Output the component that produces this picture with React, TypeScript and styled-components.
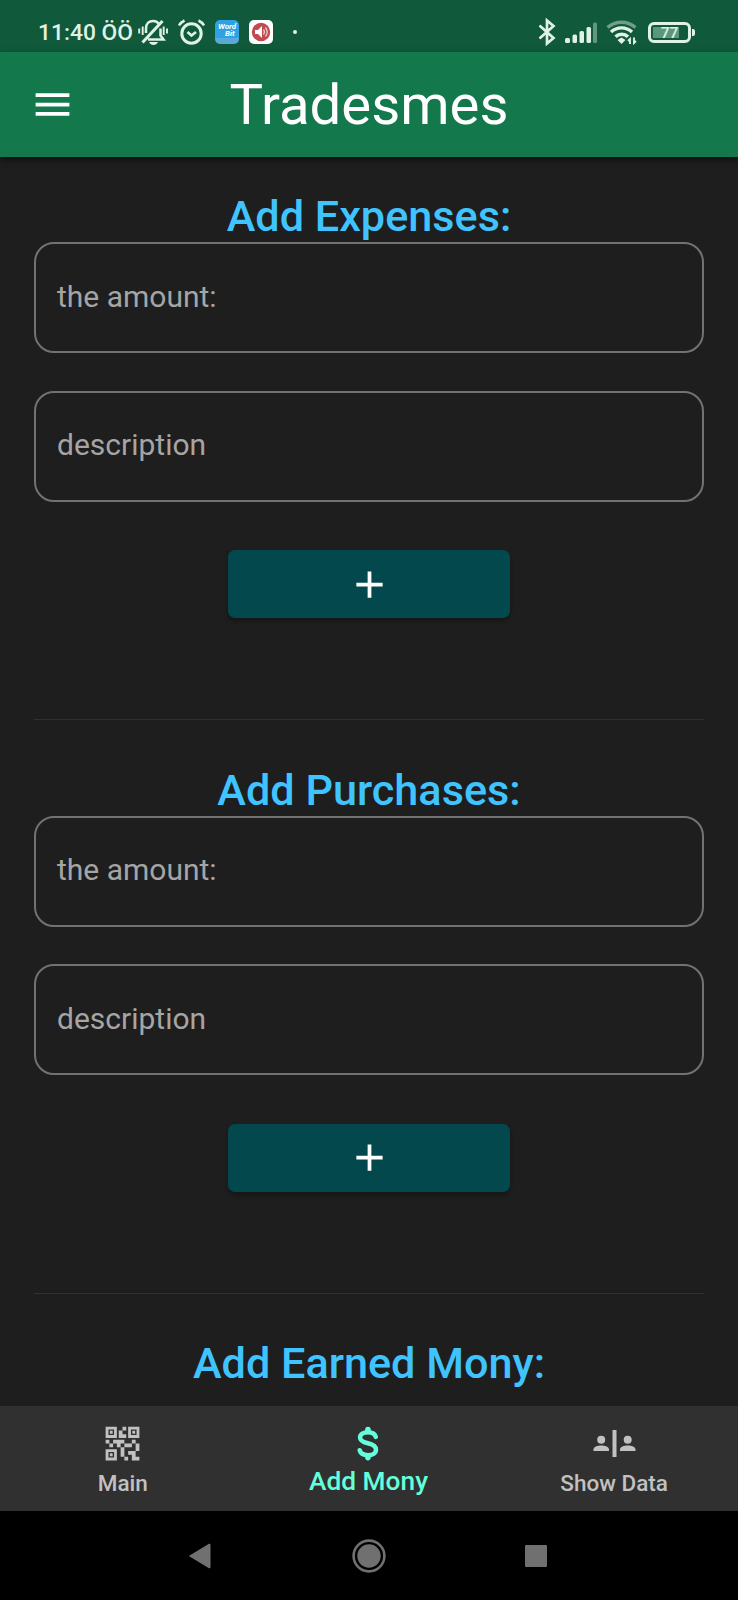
import React from 'react';
import styled, { createGlobalStyle } from 'styled-components';

const Global = createGlobalStyle`
  *{box-sizing:border-box}
  body{margin:0;background:#1e1e1e;font-family:Roboto,"Liberation Sans",sans-serif}
`;
const Screen = styled.div`
  width: 738px;
  height: 1600px;
  display: flex;
  flex-direction: column;
  overflow: hidden;
  background: #1e1e1e;
`;
const StatusBar = styled.div`
  flex: none;
  height: 52px;
  background: #10593a;
  color: #e0f2e6;
  display: flex;
  align-items: flex-start;
  justify-content: space-between;
  padding: 18px 43px 0 38px;
`;
const StatusGroup = styled.div`
  display: flex;
  align-items: center;
  height: 28px;
`;
const Clock = styled.span`
  width: 99px;
  padding-top: 2px;
  font-size: 22.8px;
  line-height: 28px;
  font-weight: 500;
  white-space: nowrap;
`;
const Glyph = styled.svg<{ $gap?: number }>`
  display: block;
  flex: none;
  margin-left: ${p => p.$gap ?? 0}px;
`;
const WordBadge = styled.div`
  width: 24px;
  height: 24px;
  margin-left: 10px;
  padding: 3px 0 0 3px;
  border-radius: 5px;
  background: linear-gradient(#2ea2e4 75%, #5aa9d8 75%);
  color: #fff;
  font: italic 700 8px/7px Roboto, sans-serif;
  display: flex;
  flex-direction: column;
`;
const WordLine = styled.span<{ $indent?: number }>`
  padding-left: ${p => p.$indent ?? 0}px;
`;
const SoundBadge = styled.div`
  width: 24px;
  height: 24px;
  margin-left: 10px;
  border-radius: 5px;
  background: #fff;
  display: flex;
  align-items: center;
  justify-content: center;
`;
const Dot = styled.span`
  width: 4px;
  height: 4px;
  margin-left: 20px;
  border-radius: 50%;
  background: currentColor;
`;
const Battery = styled.div`
  width: 43px;
  height: 21px;
  margin-left: 11px;
  border: 3px solid currentColor;
  border-radius: 6px;
  padding: 1px;
  font-size: 15.5px;
  line-height: 14px;
  font-weight: 500;
  text-align: center;
  background: linear-gradient(90deg, #5b977a 26px, transparent 26px) 2px 2px / 33px 11px no-repeat;
`;
const BatteryTip = styled.span`
  width: 3px;
  height: 7px;
  margin-left: 1px;
  border-radius: 0 2px 2px 0;
  background: currentColor;
`;
const AppBar = styled.header`
  flex: none;
  height: 105px;
  background: #13794d;
  display: grid;
  grid-template-columns: 75px 1fr 75px;
  align-items: center;
  box-shadow: 0 3px 7px rgba(0, 0, 0, 0.5);
  z-index: 1;
`;
const MenuButton = styled.button`
  border: 0;
  background: none;
  padding: 0 0 0 30px;
  display: flex;
`;
const Title = styled.h1`
  margin: 0;
  font-size: 56.3px;
  line-height: 66px;
  font-weight: 400;
  color: #fff;
  text-align: center;
  white-space: nowrap;
`;
const Content = styled.main`
  flex: 1;
  min-height: 0;
  overflow: hidden;
  padding: 34px 34px 0;
`;
const Section = styled.section`
  height: 573.7px;
  display: flex;
  flex-direction: column;
  align-items: center;
`;
const Heading = styled.h2`
  margin: 0;
  height: 51px;
  line-height: 52px;
  font-size: 43.2px;
  font-weight: 500;
  color: #40c4ff;
  text-align: center;
  white-space: nowrap;
`;
const Field = styled.div`
  flex: none;
  width: 670px;
  height: 111px;
  border: 2px solid #727272;
  border-radius: 20px;
  padding: 0 21px 2px;
  margin-bottom: 37.5px;
  display: flex;
  align-items: center;
  font-size: 30px;
  line-height: 36px;
  color: #a5a5a5;
`;
const AddButton = styled.button`
  flex: none;
  width: 282px;
  height: 68px;
  margin-top: 11px;
  border: 0;
  border-radius: 7px;
  background: #02484c;
  display: flex;
  align-items: center;
  justify-content: center;
  padding: 0;
  box-shadow: 0 3px 4px rgba(0, 0, 0, 0.3);
`;
const Divider = styled.hr`
  width: 670px;
  height: 1px;
  border: 0;
  margin: 101px 0 0;
  background: #303030;
`;
const Tabs = styled.nav`
  flex: none;
  height: 105px;
  padding-right: 1px;
  background: #303030;
  display: grid;
  grid-template-columns: repeat(3, 1fr);
`;
const Tab = styled.div<{ $active?: boolean }>`
  display: flex;
  flex-direction: column;
  align-items: center;
  padding-top: 15px;
  color: ${p => (p.$active ? '#64ffda' : '#c1c1c1')};
  font-weight: 500;
  font-size: ${p => (p.$active ? 26.3 : 22.5)}px;
`;
const TabLabel = styled.span<{ $height?: number }>`
  line-height: ${p => p.$height ?? 34}px;
  white-space: nowrap;
`;
const SystemNav = styled.div`
  flex: none;
  height: 89px;
  background: #000;
  display: flex;
  align-items: center;
  gap: 139px;
  padding: 1px 0 0 188px;
`;

const Plus = () => (
  <svg width="45" height="45" viewBox="0 0 24 24" fill="#fff">
    <path d="M19 13h-6v6h-2v-6H5v-2h6V5h2v6h6z" />
  </svg>
);

const QrIcon = () => (
  <svg width="45" height="45" viewBox="0 0 24 24" fill="currentColor">
    <path d="M15 21h-2v-2h2v2zm-2-7h-2v5h2v-5zm8-2h-2v4h2v-4zm-2-2h-2v2h2v-2zM7 12H5v2h2v-2zm-2-2H3v2h2v-2zm7-5h2V3h-2v2zm-7.5-.5v3h3v-3h-3zM9 9H3V3h6v6zm-4.5 7.5v3h3v-3h-3zM9 21H3v-6h6v6zm7.5-16.5v3h3v-3h-3zM21 9h-6V3h6v6zm-2 10v-3h-4v2h2v3h4v-2h-2zm-2-7h-4v2h4v-2zm-4-2H7v2h2v2h2v-2h2v-2zm1-1V7h-2V5h-2v4h4zM6.75 5.25h-1.5v1.5h1.5v-1.5zm0 12h-1.5v1.5h1.5v-1.5zm12-12h-1.5v1.5h1.5v-1.5z" />
  </svg>
);

const MoneyIcon = () => (
  <svg width="45" height="45" viewBox="0 0 24 24" fill="none" stroke="currentColor" strokeLinecap="round">
    <path strokeWidth="2.4" d="M15.9 8.5C15.400 6.900 13.900 6 11.800 6 9.200 6 7.500 7.100 7.500 8.800c0 1.800 1.700 2.500 4.200 3.100 2.800.7 4.300 1.600 4.300 3.400 0 1.700-1.600 2.900-4.300 2.900-2.300 0-3.900-.9-4.400-2.600" />
    <path strokeWidth="3" d="M11.700 4.500v1M11.700 18.500v1" />
  </svg>
);

const PeopleIcon = () => (
  <svg width="45" height="45" viewBox="0 0 45 45" fill="currentColor">
    <circle cx="9.2" cy="18.7" r="4" />
    <path d="M1.5 30v-1.5c0-2.6 4-3.9 7.7-3.9s7.8 1.3 7.8 3.9V30z" />
    <path d="M20.5 9h4v27h-4z" />
    <circle cx="35.7" cy="18.7" r="4" />
    <path d="M28 30v-1.5c0-2.6 4-3.9 7.7-3.9s7.8 1.3 7.8 3.9V30z" />
  </svg>
);

const Entry = ({ title }: { title: string }) => (
  <Section>
    <Heading>{title}</Heading>
    <Field>the amount:</Field>
    <Field>description</Field>
    <AddButton><Plus /></AddButton>
    <Divider />
  </Section>
);

export default function App() {
  return (
    <Screen>
      <Global />
      <StatusBar>
        <StatusGroup>
          <Clock>11:40 ÖÖ</Clock>
          <Glyph $gap={1} width="30" height="28" viewBox="0 0 30 28" fill="none" stroke="currentColor" strokeWidth="2.5">
            <path d="M8 15V10.500c0-5 3-7.500 7-7.500 2.500 0 4.500 1 5.500 2.500M22.500 10.500v7l3 4H10" />
            <path d="m4.500 24.500 20-21.500" strokeWidth="3" />
            <path d="M1.200 10.500v5M4.700 8.500v8.500M25.700 8.500V17M29 10.500v5" strokeWidth="1.900" />
            <path d="M11 24h9c-1 2-2.500 3-4.500 3S12 26 11 24z" fill="currentColor" stroke="none" />
          </Glyph>
          <Glyph $gap={9} width="28" height="28" viewBox="0 0 28 28" fill="none" stroke="currentColor">
            <circle cx="14.500" cy="15.500" r="9.700" strokeWidth="3" />
            <path d="M2 7.500c1.300-2.300 3-3.800 5.500-5M27 7.500c-1.300-2.300-3-3.800-5.500-5" strokeWidth="2.500" />
            <path d="m10.500 14 4 3.500 4.500-3.500" strokeWidth="2.700" />
          </Glyph>
          <WordBadge><WordLine>Word</WordLine><WordLine $indent={7}>Bit</WordLine></WordBadge>
          <SoundBadge>
            <svg width="20" height="20" viewBox="0 0 20 20">
              <circle cx="10" cy="10" r="9.200" fill="#bf4b50" />
              <path d="M4 8h3l4-4v12l-4-4H4z" fill="#fff" />
              <path d="M12.500 7.500q2 2.500 0 5M14.500 5.500q3.500 4.500 0 9" fill="none" stroke="#efcaca" strokeWidth="1.300" />
            </svg>
          </SoundBadge>
          <Dot />
        </StatusGroup>
        <StatusGroup>
          <Glyph width="19" height="28" viewBox="0 0 19 28" fill="none" stroke="currentColor" strokeWidth="2.700">
            <path d="m1.500 7.500 14 12.500-6.500 5.500V2.500L15.500 8l-14 12.500" />
          </Glyph>
          <Glyph $gap={7} width="34" height="28" viewBox="0 0 34 28" fill="currentColor">
            <rect x="1" y="20" width="5" height="5" rx="1.500" />
            <rect x="8.500" y="16.500" width="4.500" height="8.500" rx="1.500" />
            <rect x="15.500" y="13" width="4.500" height="12" rx="1.500" />
            <rect x="22.500" y="9" width="4.500" height="16" rx="1.500" />
            <rect x="29" y="4.500" width="4" height="20.500" rx="1.500" opacity=".4" />
          </Glyph>
          <Glyph $gap={8} width="31" height="28" viewBox="0 0 31 28" fill="none" stroke="currentColor" strokeWidth="3.400">
            <path d="M1.500 9.500c8-7 20-7 28 0" opacity=".45" />
            <path d="M5 14c6-5.500 15-5.500 21 0M9.500 18.800c3.500-3.500 9-3.500 12.500 0" />
            <path d="m11.500 22 4-2.500 4 2.500-4 4z" fill="currentColor" stroke="none" />
            <path d="M24 26v-5l-2 2M28 19.500V25l2-2" strokeWidth="1.900" />
          </Glyph>
          <Battery>77</Battery>
          <BatteryTip />
        </StatusGroup>
      </StatusBar>
      <AppBar>
        <MenuButton>
          <svg width="45" height="45" viewBox="0 0 24 24" fill="#fff"><path d="M3 18h18v-2H3zm0-5h18v-2H3zm0-7v2h18V6z" /></svg>
        </MenuButton>
        <Title>Tradesmes</Title>
      </AppBar>
      <Content>
        <Entry title="Add Expenses:" />
        <Entry title="Add Purchases:" />
        <Heading>Add Earned Mony:</Heading>
      </Content>
      <Tabs>
        <Tab><QrIcon /><TabLabel>Main</TabLabel></Tab>
        <Tab $active><MoneyIcon /><TabLabel $height={30}>Add Mony</TabLabel></Tab>
        <Tab><PeopleIcon /><TabLabel>Show Data</TabLabel></Tab>
      </Tabs>
      <SystemNav>
        <svg width="25" height="26" viewBox="0 0 25 26" fill="#707070"><path d="M.8 13 21 .8q1.500-.5 1.500 1v22.400q0 1.500-1.500 1z" /></svg>
        <svg width="34" height="34" viewBox="0 0 34 34"><circle cx="17" cy="17" r="15.400" fill="none" stroke="#707070" strokeWidth="2.600" /><circle cx="17" cy="17" r="11.700" fill="#707070" /></svg>
        <svg width="22" height="22" viewBox="0 0 22 22"><rect width="22" height="22" rx="1" fill="#707070" /></svg>
      </SystemNav>
    </Screen>
  );
}
